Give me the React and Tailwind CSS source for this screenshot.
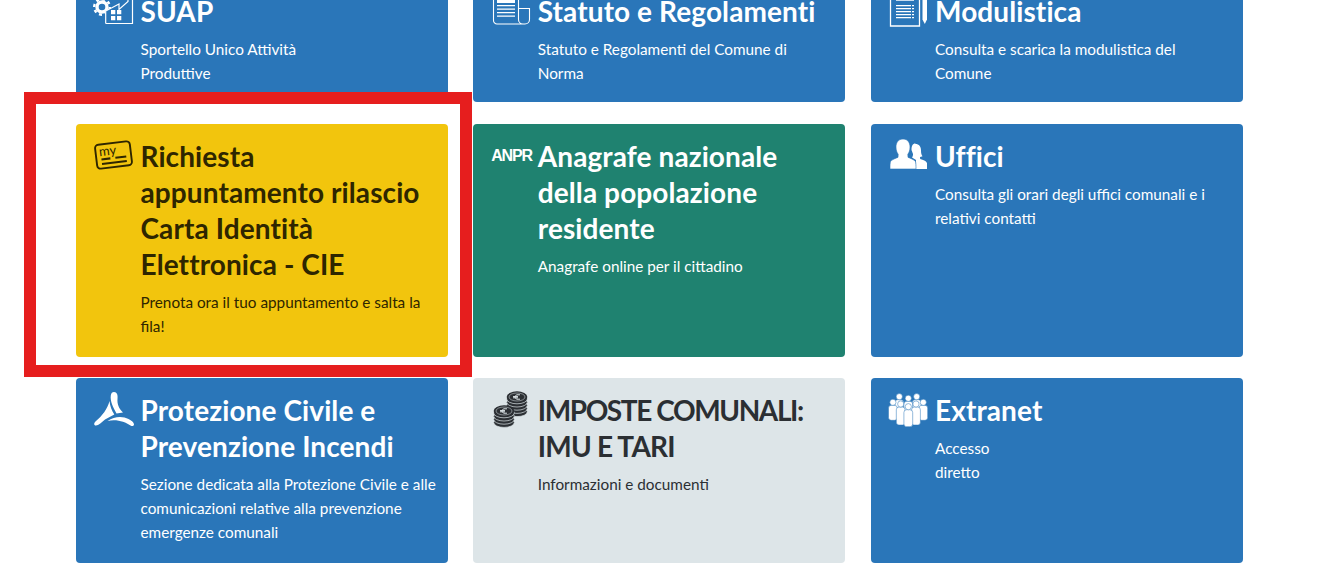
import React from 'react';

const IconSuap = () => (
  <svg width="40" height="36" viewBox="0 0 40 36" className="overflow-visible">
    <circle cx="8" cy="14" r="5" fill="none" stroke="white" strokeWidth="3.400" />
    <circle cx="8" cy="14" r="7.800" fill="none" stroke="white" strokeWidth="2.400" strokeDasharray="3 3.100" />
    <path d="M11.500 30.500V18L25 11v5l9-8V0h5v30.500Z" fill="#2a76b9" />
    <path d="M11.700 30.500V18L25 11v5.500l9-8V3M38.500 3v27.500H11.700" fill="none" stroke="white" strokeWidth="1.200" />
    <path d="M17 17h4.300v4.300H17zM23 17h4.300v4.300H23zM17 23h4.300v4.300H17zM23 23h4.300v4.300H23z" fill="white" />
  </svg>
);

const IconStatuto = () => (
  <svg width="40" height="36" viewBox="0 0 40 36" className="overflow-visible">
    <path d="M2.500 0v27.500a3.500 3.500 0 0 0 3.500 3.500h28a4.500 4.500 0 0 0 4.500-4.500V15.500H27.500M27.500 0v26.500a4.500 4.500 0 0 0 4.500 4.500" fill="none" stroke="white" strokeWidth="1.100" />
    <path d="M6 3h18v7H6zM6 12h18v1.300H6zM6 15.500h18v1.300H6zM6 19h18v1.300H6zM6 22.500h18v1.300H6z" fill="white" />
  </svg>
);

const IconModulistica = () => (
  <svg width="40" height="36" viewBox="0 0 40 36" className="overflow-visible">
    <path d="M1.500 0v33h29V0" fill="none" stroke="white" strokeWidth="1.300" />
    <path d="M7 6h18v1.800H7zM7 12h15v1.300H7zM7 15h15v1.300H7zM7 18h15v1.300H7zM7 21h15v1.300H7zM7 24h15v1.300H7zM23 12h2v1.300h-2zM23 15h2v1.300h-2zM23 18h2v1.300h-2zM23 21h2v1.300h-2zM23 24h2v1.300h-2z" fill="white" />
    <path d="M33.500 0h4.500v26.500l-2.200 4.500-2.300-4.500z" fill="white" />
  </svg>
);

const IconCard = () => (
  <svg width="40" height="36" viewBox="0 0 40 36" className="overflow-visible">
    <g transform="rotate(-7 19.500 17)">
      <rect x="2" y="5" width="35" height="24" rx="3.500" fill="none" stroke="#2e2600" strokeWidth="1.900" />
      <text x="5.500" y="16.500" fontSize="13" fontFamily="Lato, sans-serif" fill="#2e2600">my</text>
      <path d="M7 20h9M21 20h11M7 24.500h25" fill="none" stroke="#2e2600" strokeWidth="2.100" />
    </g>
  </svg>
);

const IconUffici = () => (
  <svg width="40" height="36" viewBox="0 0 40 36" className="overflow-visible">
    <path d="M26.500 6c3.500 0 5.500 2.600 5.500 6.500 0 2.800.6 4.600 1.500 5.700-1 .6-1.800.8-2.500.8l.2 2c3 1 5.800 1.800 6.800 4v6H27v-9l-4-2.500c1-1 1-3 1-3.500l-1.500-4c0-4 1-6.500 4-6.500Z" fill="white" />
    <path d="M14 1c4.500 0 7 3.500 7 8 0 3-.8 5.500-2.200 7.300l.2 3c1.700 1 6.200 2 7.400 4.200.6 1 .6 4.500.6 7.500H1c0-3 0-6.500.6-7.500C2.800 21.300 7.300 20.300 9 19.300l.2-3C7.800 14.500 7 12 7 9c0-4.500 2.500-8 7-8Z" fill="white" stroke="#2a76b9" strokeWidth="0.600" />
  </svg>
);

const IconProtezione = () => (
  <svg width="40" height="36" viewBox="0 0 40 36" className="overflow-visible">
    <path d="M20 0c3 0 4 3 3.500 7C23 12 25 17 29 20.500l-6.500 1C19 15 16 9 16.800 3.500 17.100 1 18.300 0 20 0Z" fill="white" />
    <path d="M15.500 9c.5 5 2.300 9.500 4.800 13.500L11 27.500C8 30 4.500 33.500 2 33.500c-2.500 0-2.300-2.500 0-4.500 6-5 11.500-12 13.500-20Z" fill="white" />
    <path d="M13.500 29c7-5 15.500-5 21-2 3 1.500 5.500 3.500 5.500 5.500 0 1.500-1.800 2-3.500 1C31 30 23 27 13.500 29Z" fill="white" />
  </svg>
);

const Coin = ({ cx, cy, n }) => (
  <g>
    {Array.from({ length: n }).map((_, i) => (
      <ellipse key={i} cx={cx} cy={cy + (n - 1 - i) * 3.200 + 2} rx="10.300" ry="4.800" fill="#2b2f33" stroke="#dde5e8" strokeWidth="0.700" />
    ))}
    <ellipse cx={cx} cy={cy} rx="10.300" ry="5.800" fill="#2b2f33" />
    <ellipse cx={cx} cy={cy} rx="8" ry="4" fill="none" stroke="#dde5e8" strokeWidth="0.500" />
    <path d={`M${cx + 3} ${cy - 2.200}h-3.500l-1.800 2.200 1.800 2.200h3.500M${cx - 4} ${cy - 0.400}h5M${cx - 4} ${cy + 0.800}h5`} fill="none" stroke="#dde5e8" strokeWidth="1" />
  </g>
);

const IconCoins = () => (
  <svg width="40" height="36" viewBox="0 0 40 36" className="overflow-visible">
    <Coin cx={26} cy={5} n={5} />
    <Coin cx={13} cy={19} n={4} />
  </svg>
);

const Person = ({ x, y, h }) => (
  <g fill="white" stroke="#2a76b9" strokeWidth="0.500">
    <rect x={x - 4.400} y={y + 3} width="8.800" height={h} rx="2.800" />
    <circle cx={x} cy={y} r="3.100" />
  </g>
);

const IconExtranet = () => (
  <svg width="40" height="36" viewBox="0 0 40 36" className="overflow-visible">
    <Person x={10.300} y={4.700} h={14} />
    <Person x={27.700} y={4.700} h={14} />
    <Person x={19.300} y={6.300} h={14} />
    <Person x={3.900} y={10.300} h={15} />
    <Person x={34.300} y={10.300} h={15} />
    <Person x={11.700} y={12} h={18} />
    <Person x={27} y={12} h={18} />
    <Person x={19.300} y={14.700} h={17} />
  </svg>
);

const IconAnpr = () => (
  <span className="block pt-[8px] font-['Liberation_Sans',sans-serif] text-[16px] leading-[20px] font-bold tracking-[-1.200px] text-white">ANPR</span>
);

const cards = [
  { title: ['SUAP'], desc: ['Sportello Unico Attività', 'Produttive'], icon: IconSuap, tone: 'blue' },
  { title: ['Statuto e Regolamenti'], desc: ['Statuto e Regolamenti del Comune di', 'Norma'], icon: IconStatuto, tone: 'blue' },
  { title: ['Modulistica'], desc: ['Consulta e scarica la modulistica del', 'Comune'], icon: IconModulistica, tone: 'blue' },
  { title: ['Richiesta', 'appuntamento rilascio', 'Carta Identità', 'Elettronica - CIE'], desc: ['Prenota ora il tuo appuntamento e salta la', 'fila!'], icon: IconCard, tone: 'yellow' },
  { title: ['Anagrafe nazionale', 'della popolazione', 'residente'], desc: ['Anagrafe online per il cittadino'], icon: IconAnpr, tone: 'green' },
  { title: ['Uffici'], desc: ['Consulta gli orari degli uffici comunali e i', 'relativi contatti'], icon: IconUffici, tone: 'blue' },
  { title: ['Protezione Civile e', 'Prevenzione Incendi'], desc: ['Sezione dedicata alla Protezione Civile e alle', 'comunicazioni relative alla prevenzione', 'emergenze comunali'], icon: IconProtezione, tone: 'blue' },
  { title: ['IMPOSTE COMUNALI:', 'IMU E TARI'], desc: ['Informazioni e documenti'], icon: IconCoins, tone: 'grey', caps: ['tracking-[-1.400px]', 'tracking-[-0.800px]'] },
  { title: ['Extranet'], desc: ['Accesso', 'diretto'], icon: IconExtranet, tone: 'blue' },
];

const tones = {
  blue: 'bg-[#2a76b9] text-white',
  green: 'bg-[#1f8270] text-white',
  yellow: 'bg-[#f2c50d] text-[#2e2600]',
  grey: 'bg-[#dde5e8] text-[#2b2f33]',
};

const Card = ({ title, desc, icon: Icon, tone, caps }) => (
  <a className={`flex overflow-hidden rounded-[4px] pt-[14px] pl-[18px] ${tones[tone]}`}>
    <div className="w-[40px] shrink-0"><Icon /></div>
    <div className="ml-[6.500px] min-w-0">
      <h3 className="text-[28px] leading-[36px] font-bold tracking-[0.100px] whitespace-nowrap">
        {title.map((t, i) => <span key={i} className={`block ${caps ? caps[i] : ''}`}>{t}</span>)}
      </h3>
      <p className="mt-[8px] text-[15.300px] leading-[24px] whitespace-nowrap">
        {desc.map((t, i) => <span key={i} className="block">{t}</span>)}
      </p>
    </div>
  </a>
);

export default function App() {
  return (
    <div className="relative h-[568px] overflow-hidden bg-white font-['Lato',sans-serif]">
      <div className="ml-[76px] -mt-[21px] grid w-[1167px] grid-cols-[372px_372px_372px] grid-rows-[123px_233px_185px] gap-x-[25.250px] gap-y-[21.500px]">
        {cards.map((c) => <Card key={c.title[0]} {...c} />)}
      </div>
      {/* evidenziazione rossa */}
      <div className="pointer-events-none absolute top-[92px] left-[24px] h-[285px] w-[448px] border-[12px] border-[#e61e1e]" />
    </div>
  );
}
